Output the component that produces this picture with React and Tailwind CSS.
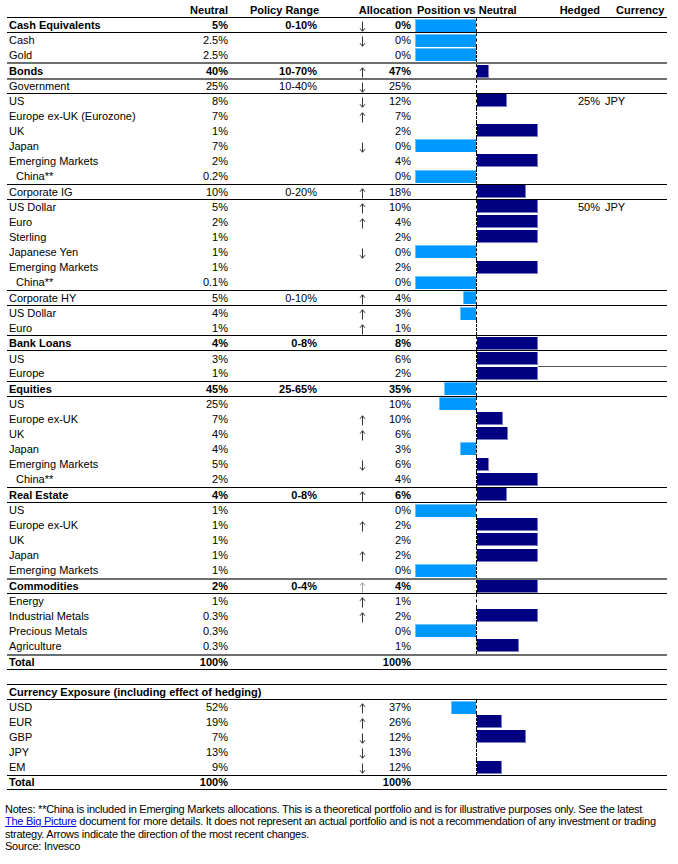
import React from "react";

const rows = [
  { label: "Cash Equivalents", neutral: "5%", range: "0-10%", arrow: "down", alloc: "0%", bar: -61, bold: true, line: "black" },
  { label: "Cash", neutral: "2.5%", arrow: "down", alloc: "0%", bar: -61, line: "black" },
  { label: "Gold", neutral: "2.5%", alloc: "0%", bar: -61 },
  { label: "Bonds", neutral: "40%", range: "10-70%", arrow: "up", alloc: "47%", bar: 12, bold: true, line: "gray" },
  { label: "Government", neutral: "25%", range: "10-40%", arrow: "down", alloc: "25%", bar: 0, line: "gray" },
  { label: "US", neutral: "8%", arrow: "down", alloc: "12%", bar: 30, line: "black", hedged: "25%", currency: "JPY" },
  { label: "Europe ex-UK (Eurozone)", neutral: "7%", arrow: "up", alloc: "7%", bar: 0 },
  { label: "UK", neutral: "1%", alloc: "2%", bar: 61 },
  { label: "Japan", neutral: "7%", arrow: "down", alloc: "0%", bar: -61 },
  { label: "Emerging Markets", neutral: "2%", alloc: "4%", bar: 61 },
  { label: "China**", neutral: "0.2%", alloc: "0%", bar: -61, indent: true },
  { label: "Corporate IG", neutral: "10%", range: "0-20%", arrow: "up", alloc: "18%", bar: 49, line: "black" },
  { label: "US Dollar", neutral: "5%", arrow: "up", alloc: "10%", bar: 61, line: "black", hedged: "50%", currency: "JPY" },
  { label: "Euro", neutral: "2%", arrow: "up", alloc: "4%", bar: 61 },
  { label: "Sterling", neutral: "1%", alloc: "2%", bar: 61 },
  { label: "Japanese Yen", neutral: "1%", arrow: "down", alloc: "0%", bar: -61 },
  { label: "Emerging Markets", neutral: "1%", alloc: "2%", bar: 61 },
  { label: "China**", neutral: "0.1%", alloc: "0%", bar: -61, indent: true },
  { label: "Corporate HY", neutral: "5%", range: "0-10%", arrow: "up", alloc: "4%", bar: -13, line: "black" },
  { label: "US Dollar", neutral: "4%", arrow: "up", alloc: "3%", bar: -16, line: "black" },
  { label: "Euro", neutral: "1%", arrow: "up", alloc: "1%", bar: 0 },
  { label: "Bank Loans", neutral: "4%", range: "0-8%", alloc: "8%", bar: 61, bold: true, line: "black" },
  { label: "US", neutral: "3%", alloc: "6%", bar: 61, line: "black" },
  { label: "Europe", neutral: "1%", alloc: "2%", bar: 61, line: "partial" },
  { label: "Equities", neutral: "45%", range: "25-65%", alloc: "35%", bar: -32, bold: true, line: "black" },
  { label: "US", neutral: "25%", alloc: "10%", bar: -37, line: "black" },
  { label: "Europe ex-UK", neutral: "7%", arrow: "up", alloc: "10%", bar: 26 },
  { label: "UK", neutral: "4%", arrow: "up", alloc: "6%", bar: 31 },
  { label: "Japan", neutral: "4%", alloc: "3%", bar: -16 },
  { label: "Emerging Markets", neutral: "5%", arrow: "down", alloc: "6%", bar: 12 },
  { label: "China**", neutral: "2%", alloc: "4%", bar: 61, indent: true },
  { label: "Real Estate", neutral: "4%", range: "0-8%", arrow: "up", alloc: "6%", bar: 30, bold: true, line: "black" },
  { label: "US", neutral: "1%", alloc: "0%", bar: -61, line: "black" },
  { label: "Europe ex-UK", neutral: "1%", arrow: "up", alloc: "2%", bar: 61 },
  { label: "UK", neutral: "1%", alloc: "2%", bar: 61 },
  { label: "Japan", neutral: "1%", arrow: "up", alloc: "2%", bar: 61 },
  { label: "Emerging Markets", neutral: "1%", alloc: "0%", bar: -61 },
  { label: "Commodities", neutral: "2%", range: "0-4%", arrow: "up", alloc: "4%", bar: 61, bold: true, line: "gray", grayArrow: true },
  { label: "Energy", neutral: "1%", arrow: "up", alloc: "1%", bar: 0, line: "black" },
  { label: "Industrial Metals", neutral: "0.3%", arrow: "up", alloc: "2%", bar: 61 },
  { label: "Precious Metals", neutral: "0.3%", alloc: "0%", bar: -61 },
  { label: "Agriculture", neutral: "0.3%", alloc: "1%", bar: 42 },
  { label: "Total", neutral: "100%", alloc: "100%", bold: true, line: "gray", noBar: true },
  { label: "", noBar: true, line: "black" },
];

const currency = [
  { label: "USD", neutral: "52%", arrow: "up", alloc: "37%", bar: -25, line: "black" },
  { label: "EUR", neutral: "19%", arrow: "up", alloc: "26%", bar: 25 },
  { label: "GBP", neutral: "7%", arrow: "down", alloc: "12%", bar: 49 },
  { label: "JPY", neutral: "13%", arrow: "down", alloc: "13%", bar: 0 },
  { label: "EM", neutral: "9%", arrow: "down", alloc: "12%", bar: 25 },
  { label: "Total", neutral: "100%", alloc: "100%", bold: true, line: "black", noBar: true, last: true },
];

// thin arrow like the one in the source spreadsheet
const Arrow = ({ dir, gray }) => {
  const c = gray ? "#a0a0a0" : "#333";
  return (
    <svg width="7" height="11" viewBox="0 0 7 11" className="mt-[3px]">
      {dir === "down" ? (
        <>
          <path d="M3.5 0.5V10" stroke={c} strokeWidth="1" />
          <path d="M1 7.2L3.5 10.3L6 7.2" stroke={c} strokeWidth="1" fill="none" />
        </>
      ) : (
        <>
          <path d="M3.5 1V10.5" stroke={c} strokeWidth="1" />
          <path d="M1 3.8L3.5 0.7L6 3.8" stroke={c} strokeWidth="1" fill="none" />
        </>
      )}
    </svg>
  );
};

const Row = ({ r }) => {
  let border = "";
  if (r.line === "black") border = "border-t border-black";
  if (r.line === "gray") border = "border-t-2 border-[#6e6e6e]";
  const weight = r.bold ? "font-bold" : "font-normal";

  return (
    <div className={`flex h-[15.16px] items-center leading-[14px] ${border} ${r.last ? "border-b border-black" : ""}`}>
      <div className={`w-[140px] whitespace-nowrap ${r.indent ? "pl-[9px]" : "pl-[2px]"} ${weight}`}>{r.label}</div>
      <div className={`w-[81px] text-right ${weight}`}>{r.neutral}</div>
      <div className={`w-[89px] text-right ${weight}`}>{r.range}</div>
      <div className="flex h-full w-[55px] items-center pl-[42px]">
        {r.arrow && <Arrow dir={r.arrow} gray={r.grayArrow} />}
      </div>
      <div className={`w-[40px] pr-[1px] text-right ${weight}`}>{r.alloc}</div>
      <div className="flex h-full w-[64px] items-center justify-end">
        {r.bar < 0 && <div className="h-[13px] border-t border-l border-[#6cc0ff] bg-[#0099ff]" style={{ width: -r.bar }} />}
      </div>
      <div className={`flex h-full w-[62px] items-center ${r.noBar ? "" : "border-l border-dashed border-black"}`}>
        {r.bar > 0 && <div className="h-[13px] border-r border-b border-[#7b7bc0] bg-[#000080]" style={{ width: r.bar }} />}
      </div>
      <div className={`flex h-full flex-1 items-center ${r.line === "partial" ? "border-t border-[#555]" : ""}`}>
        <div className="w-[62px] text-right">{r.hedged}</div>
        <div className="pl-[5px]">{r.currency}</div>
      </div>
    </div>
  );
};

export default function App() {
  return (
    <div className="min-h-screen w-[678px] bg-white pt-[2px] text-[11px] text-black" style={{ fontFamily: '"Liberation Sans", Arial, sans-serif' }}>
      <div className="ml-[7px] w-[660px]">
        {/* header */}
        <div className="flex h-[15px] items-center font-bold leading-[14px]">
          <div className="w-[140px]"></div>
          <div className="w-[81px] text-right">Neutral</div>
          <div className="w-[91px] text-right">Policy Range</div>
          <div className="w-[93px] text-right">Allocation</div>
          <div className="w-[126px] whitespace-nowrap pl-[5px]">Position vs Neutral</div>
          <div className="w-[62px] text-right">Hedged</div>
          <div className="pl-[16px]">Currency</div>
        </div>

        {rows.map((r, i) => (
          <Row key={i} r={r} />
        ))}

        <div className="flex h-[15.16px] items-center border-t border-black pl-[2px] font-bold leading-[14px] whitespace-nowrap">
          Currency Exposure (including effect of hedging)
        </div>

        {currency.map((r, i) => (
          <Row key={i} r={r} />
        ))}
      </div>

      <div className="mt-[13px] pl-[5px] pr-[6px] text-[11px] leading-[12.5px] tracking-[-0.25px]">
        <p>
          Notes: **China is included in Emerging Markets allocations. This is a theoretical portfolio and is for illustrative purposes only. See the latest{" "}
          <span className="whitespace-nowrap text-[#0000ee] underline">The Big Picture</span> document for more details. It does not represent an actual portfolio and is not a recommendation of any investment or trading strategy. Arrows indicate the direction of the most recent changes.
        </p>
        <p>Source: Invesco</p>
      </div>
    </div>
  );
}
